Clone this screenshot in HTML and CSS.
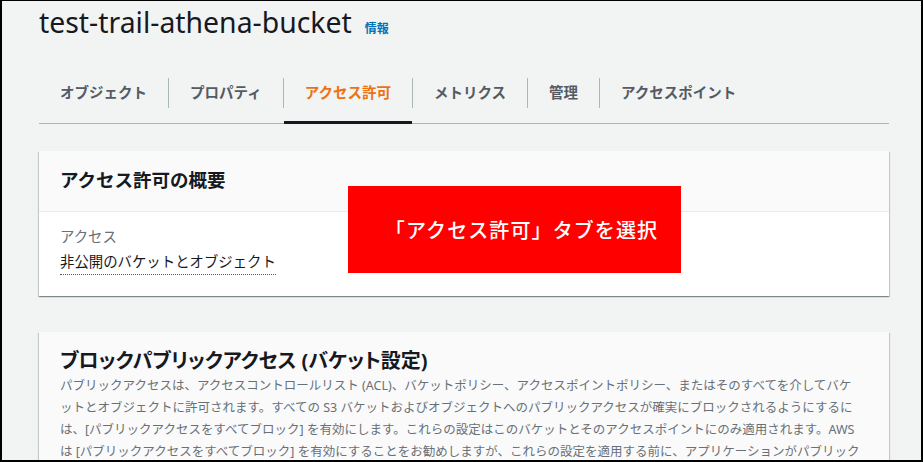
FILE: index.html
```html
<!DOCTYPE html>
<html lang="ja">
<head>
<meta charset="utf-8">
<title>test-trail-athena-bucket</title>
<link rel="stylesheet" href="styles.css">
</head>
<body>
<div class="frame">
  <header class="page-head">
    <h1 class="title">test-trail-athena-bucket</h1>
    <a class="info" href="#">情報</a>
  </header>

  <nav class="tabs">
    <div class="tab">オブジェクト</div>
    <div class="sep"></div>
    <div class="tab">プロパティ</div>
    <div class="sep"></div>
    <div class="tab active">アクセス許可</div>
    <div class="sep"></div>
    <div class="tab">メトリクス</div>
    <div class="sep"></div>
    <div class="tab">管理</div>
    <div class="sep"></div>
    <div class="tab">アクセスポイント</div>
  </nav>

  <section class="card">
    <div class="card-head"><h2 class="card-title">アクセス許可の概要</h2></div>
    <div class="card-body">
      <div class="label">アクセス</div>
      <div class="value"><span class="dotted">非公開のバケットとオブジェクト</span></div>
    </div>
  </section>

  <section class="card card2">
    <h2 class="card2-title">ブロックパブリックアクセス (バケット設定)</h2>
    <p class="desc">パブリックアクセスは、アクセスコントロールリスト (ACL)、バケットポリシー、アクセスポイントポリシー、またはそのすべてを介してバケ<br>ットとオブジェクトに許可されます。すべての S3 バケットおよびオブジェクトへのパブリックアクセスが確実にブロックされるようにするに<br>は、[パブリックアクセスをすべてブロック] を有効にします。これらの設定はこのバケットとそのアクセスポイントにのみ適用されます。AWS<br>は [パブリックアクセスをすべてブロック] を有効にすることをお勧めしますが、これらの設定を適用する前に、アプリケーションがパブリック</p>
  </section>

  <div class="callout">「アクセス許可」タブを選択</div>
</div>
</body>
</html>
```

FILE: styles.css
```css
* { box-sizing: border-box; }
html, body { margin: 0; padding: 0; }
body {
  font-family: "Noto Sans", "Noto Sans CJK JP", sans-serif;
  color: #16191f;
  background: #fff;
}
.frame {
  position: relative;
  width: 923px;
  height: 462px;
  overflow: hidden;
  background: #f2f3f3;
  border-style: solid;
  border-color: #000;
  border-width: 1px 2px 2px 2px;
  padding: 0 32px 0 37px;
}
.page-head {
  display: flex;
  align-items: baseline;
  gap: 13px;
  height: 62px;
}
.title {
  margin: 0;
  font-size: 28.4px;
  font-weight: 400;
  line-height: 42px;
  color: #16191f;
}
.info {
  font-size: 12px;
  font-weight: 700;
  color: #0073bb;
  text-decoration: none;
}
.tabs {
  display: flex;
  align-items: stretch;
  height: 61px;
  border-bottom: 1px solid #aab7b8;
}
.tab {
  display: flex;
  align-items: center;
  padding: 0 21px 4px;
  font-size: 14.5px;
  font-weight: 700;
  color: #545b64;
}
.tab.active {
  color: #ec7211;
  border-bottom: 3px solid #16191f;
  margin-bottom: -1px;
  padding-bottom: 2px;
}
.sep {
  width: 1px;
  height: 30px;
  align-self: center;
  margin-top: -1px;
  background: #aab7b8;
}
.card {
  margin-top: 27px;
  background: #fff;
  box-shadow: 0 1px 1px 0 rgba(0,28,36,.3), 1px 1px 1px 0 rgba(0,28,36,.15), -1px 1px 1px 0 rgba(0,28,36,.15);
}
.card-head {
  background: #fafafa;
  height: 61px;
  border-bottom: 1px solid #eaeded;
  display: flex;
  align-items: center;
  padding: 0 21px 2px;
}
.card-title {
  margin: 0;
  font-size: 18.5px;
  font-weight: 700;
  line-height: 24px;
}
.card-body {
  padding: 13px 21px 0;
  height: 84px;
  font-size: 14.4px;
}
.label {
  color: #687078;
  line-height: 24px;
}
.value {
  line-height: 26px;
}
.dotted {
  border-bottom: 1.5px dotted #545b64;
  padding-bottom: 3px;
}
.card2 {
  margin-top: 36px;
  background: #fafafa;
  height: 140px;
  padding: 15px 21px 0;
}
.card2-title {
  margin: 0;
  font-size: 20px;
  font-weight: 700;
  line-height: 28px;
  font-feature-settings: "palt";
}
.desc {
  margin: 0;
  font-size: 12.5px;
  line-height: 22px;
  color: #687078;
  white-space: nowrap;
}
.callout {
  position: absolute;
  left: 346px;
  top: 185px;
  width: 333px;
  height: 87px;
  padding-left: 14px;
  background: #ff0000;
  color: #fff;
  font-size: 20px;
  font-weight: 500;
  display: flex;
  align-items: center;
  justify-content: center;
  letter-spacing: 1.1px;
}
```
